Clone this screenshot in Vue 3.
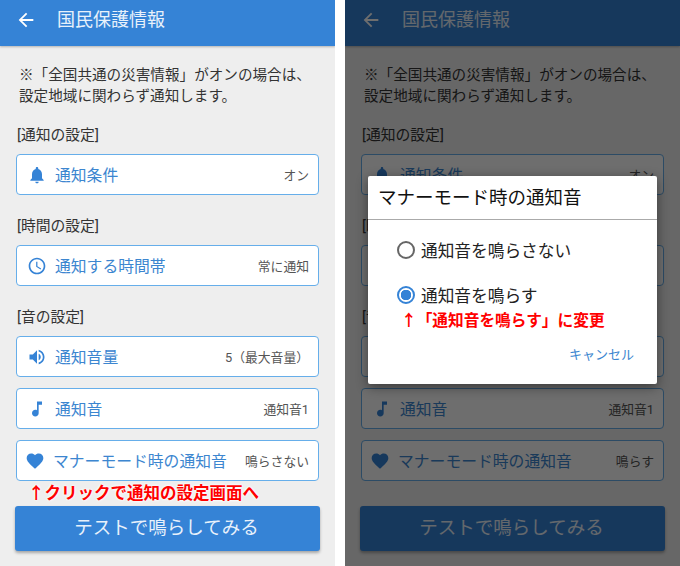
<script setup>
const icons = {
  bell: 'M12 22c1.1 0 2-.9 2-2h-4c0 1.1.89 2 2 2zm6-6v-5c0-3.07-1.64-5.64-4.5-6.32V4c0-.83-.67-1.5-1.5-1.5s-1.5.67-1.5 1.5v.68C7.63 5.36 6 7.92 6 11v5l-2 2v1h16v-1l-2-2z',
  clock: 'M11.99 2C6.47 2 2 6.48 2 12s4.47 10 9.99 10C17.52 22 22 17.52 22 12S17.52 2 11.99 2zM12 20c-4.42 0-8-3.58-8-8s3.58-8 8-8 8 3.58 8 8-3.58 8-8 8zm.5-13H11v6l5.25 3.15.75-1.23-4.5-2.67z',
  volume: 'M3 9v6h4l5 5V4L7 9H3zm13.5 3c0-1.77-1.02-3.29-2.5-4.03v8.05c1.48-.73 2.5-2.25 2.5-4.02zM14 3.23v2.06c2.89.86 5 3.54 5 6.71s-2.11 5.85-5 6.71v2.06c4.01-.91 7-4.49 7-8.77s-2.99-7.86-7-8.77z',
  music: 'M12 3v10.55c-.59-.34-1.27-.55-2-.55-2.21 0-4 1.79-4 4s1.79 4 4 4 4-1.79 4-4V7h4V3h-6z',
  heart: 'M12 21.35l-1.45-1.32C5.4 15.36 2 12.28 2 8.5 2 5.42 4.42 3 7.5 3c1.74 0 3.41.81 4.5 2.09C13.09 3.81 14.76 3 16.5 3 19.58 3 22 5.42 22 8.5c0 3.78-3.4 6.86-8.55 11.54L12 21.35z',
}

const sections = (manner) => [
  { title: '[通知の設定]', rows: [{ icon: 'bell', label: '通知条件', value: 'オン' }] },
  { title: '[時間の設定]', rows: [{ icon: 'clock', label: '通知する時間帯', value: '常に通知' }] },
  {
    title: '[音の設定]',
    rows: [
      { icon: 'volume', label: '通知音量', value: '5（最大音量）' },
      { icon: 'music', label: '通知音', value: '通知音1' },
      { icon: 'heart', label: 'マナーモード時の通知音', value: manner },
    ],
  },
]

const phones = [
  { id: 'a', manner: '鳴らさない', hint: '↑クリックで通知の設定画面へ', dialog: false },
  { id: 'b', manner: '鳴らす', hint: '', dialog: true },
]
</script>

<template>
  <div class="screens">
    <section v-for="p in phones" :key="p.id" class="phone">
      <header class="bar">
        <svg class="back" viewBox="0 0 24 24"><path d="M20 11H7.83l5.59-5.59L12 4l-8 8 8 8 1.41-1.41L7.83 13H20v-2z" /></svg>
        <h1 class="bar-title">国民保護情報</h1>
      </header>
      <main class="body">
        <p class="notice">※「全国共通の災害情報」がオンの場合は、<br />設定地域に関わらず通知します。</p>
        <div class="groups">
          <div v-for="s in sections(p.manner)" :key="s.title">
            <h2 class="group-title">{{ s.title }}</h2>
            <div class="rows">
              <div v-for="r in s.rows" :key="r.label" class="row">
                <svg class="row-icon" :class="'i-' + r.icon" viewBox="0 0 24 24"><path :d="icons[r.icon]" /></svg>
                <span class="row-label">{{ r.label }}</span>
                <span class="row-value">{{ r.value }}</span>
              </div>
            </div>
          </div>
        </div>
        <div class="hint-slot"><span v-if="p.hint" class="hint">{{ p.hint }}</span></div>
        <button class="test">テストで鳴らしてみる</button>
      </main>
      <div v-if="p.dialog" class="scrim">
        <div class="dialog">
          <div class="dialog-title">マナーモード時の通知音</div>
          <div class="options">
            <div class="option"><span class="radio"></span>通知音を鳴らさない</div>
            <div class="option second"><span class="radio on"></span>通知音を鳴らす</div>
            <div class="dialog-hint">↑「通知音を鳴らす」に変更</div>
          </div>
          <div class="actions"><span class="cancel">キャンセル</span></div>
        </div>
      </div>
    </section>
  </div>
</template>

<style>
html, body { margin: 0; background: #fff; }
</style>

<style scoped>
.screens {
  display: flex;
  gap: 10px;
  width: 680px;
  height: 566px;
  overflow: hidden;
  font-family: Roboto, "Noto Sans CJK JP", sans-serif;
}
.phone {
  position: relative;
  width: 335px;
  height: 566px;
  background: #eeeeee;
  overflow: hidden;
}
.bar {
  display: flex;
  align-items: center;
  height: 46px;
  padding: 0 0 6px 15px;
  box-sizing: border-box;
  background: #3583d6;
  box-shadow: 0 1px 2px rgba(0, 0, 0, .25);
}
.back { width: 22px; height: 22px; fill: #fff; }
.bar-title {
  margin: 0 0 1px 20px;
  font-size: 18px;
  font-weight: 400;
  line-height: 28px;
  color: #e8f1fb;
}
.body { padding: 19px 15px 0; }
.notice {
  margin: 0 0 17px 4px;
  font-size: 14.6px;
  line-height: 21px;
  color: #333;
  white-space: nowrap;
}
.groups { display: flex; flex-direction: column; gap: 20px; }
.group-title {
  margin: 0 0 9px 2px;
  padding-top: 1px;
  font-size: 14.8px;
  font-weight: 400;
  line-height: 20px;
  color: #333;
}
.rows { display: flex; flex-direction: column; gap: 11px; }
.row {
  display: flex;
  align-items: center;
  height: 41px;
  margin: 0 1px;
  padding: 0 9px 0 10px;
  box-sizing: border-box;
  background: #fff;
  border: 1px solid #66aeea;
  border-radius: 4px;
}
.row-icon { flex: none; width: 20px; height: 20px; fill: #3583d6; }
.i-heart { margin-left: -2px; }
.row-label {
  margin-left: 8px;
  font-size: 15.8px;
  color: #3c86d0;
  white-space: nowrap;
}
.row-value {
  margin-left: auto;
  font-size: 12.8px;
  color: #555;
  white-space: nowrap;
}
.hint-slot {
  display: flex;
  align-items: center;
  height: 25px;
  padding-left: 13px;
}
.hint {
  font-size: 16.5px;
  font-weight: 700;
  line-height: 24px;
  color: #ff0000;
  text-shadow: 0 0 3px #fff, 0 0 3px #fff;
  white-space: nowrap;
}
.test {
  display: block;
  width: 305px;
  height: 45px;
  padding: 0 2px 5px 0;
  border: 0;
  border-radius: 3px;
  background: #3583d6;
  box-shadow: 0 2px 3px rgba(0, 0, 0, .3);
  font: inherit;
  font-size: 18.5px;
  color: #e8f1fb;
}
.scrim {
  position: absolute;
  inset: 0;
  display: flex;
  align-items: center;
  justify-content: center;
  padding-bottom: 6px;
  box-sizing: border-box;
  background: rgba(0, 0, 0, .57);
}
.dialog {
  display: flex;
  flex-direction: column;
  width: 289px;
  height: 208px;
  background: #fff;
  border-radius: 2px;
  box-shadow: 0 3px 12px rgba(0, 0, 0, .45);
}
.dialog-title {
  height: 44px;
  padding-left: 10px;
  box-sizing: border-box;
  border-bottom: 1px solid #aaa;
  font-size: 18.5px;
  line-height: 45px;
  color: #111;
  white-space: nowrap;
}
.options { padding: 19px 0 0 29px; }
.option {
  display: flex;
  align-items: center;
  gap: 6px;
  height: 22px;
  font-size: 16.7px;
  color: #222;
  white-space: nowrap;
}
.second { margin-top: 23px; }
.radio {
  flex: none;
  width: 18px;
  height: 18px;
  box-sizing: border-box;
  border: 2px solid #666;
  border-radius: 50%;
}
.radio.on {
  border-color: #3583d6;
  background: radial-gradient(circle, #3583d6 0 5px, #fff 5.5px);
}
.dialog-hint {
  margin: 3px 0 0 4px;
  font-size: 15.7px;
  font-weight: 700;
  line-height: 24px;
  color: #ff0000;
  white-space: nowrap;
}
.actions {
  display: flex;
  justify-content: flex-end;
  padding: 12px 23px 0 0;
}
.cancel { font-size: 13px; line-height: 20px; color: #3c86d0; }
</style>
